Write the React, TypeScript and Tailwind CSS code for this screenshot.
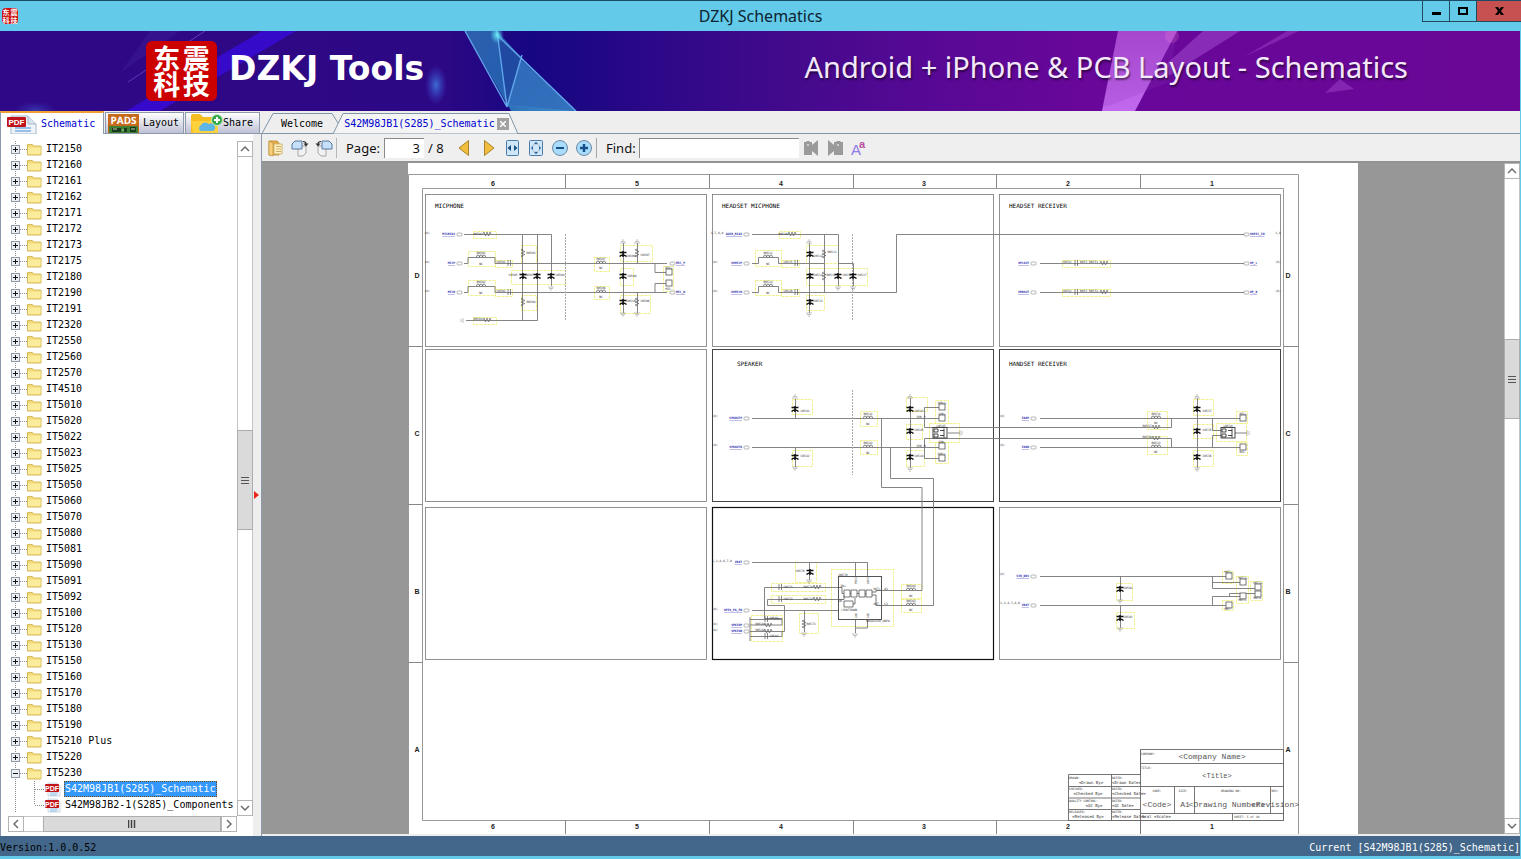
import React from "react";

const models = [
  "IT2150", "IT2160", "IT2161", "IT2162", "IT2171", "IT2172", "IT2173", "IT2175", "IT2180", "IT2190",
  "IT2191", "IT2320", "IT2550", "IT2560", "IT2570", "IT4510", "IT5010", "IT5020", "IT5022", "IT5023",
  "IT5025", "IT5050", "IT5060", "IT5070", "IT5080", "IT5081", "IT5090", "IT5091", "IT5092", "IT5100",
  "IT5120", "IT5130", "IT5150", "IT5160", "IT5170", "IT5180", "IT5190", "IT5210 Plus", "IT5220", "IT5230",
];

const mono = "font-['DejaVu_Sans_Mono','Liberation_Mono',monospace] text-[10px] leading-4";
const ui = "font-['Noto_Sans','Open_Sans',sans-serif]";

/* ---------- title bar and banner ---------- */

function TitleBar() {
  return (
    <header className="grid h-[31px] shrink-0 grid-cols-[1fr_auto_1fr] items-center border-t border-[#1d4a66] bg-[#64caea]">
      <span className="ml-0.5 grid size-4 grid-cols-2 place-items-center rounded-sm bg-[#cc1111] font-['Noto_Sans_CJK_SC',sans-serif] text-[7px] font-bold leading-[7px] text-white">
        <span>东</span><span>震</span><span>科</span><span>技</span>
      </span>
      <h1 className={`text-[16px] leading-6 text-[#0c2330] ${ui}`}>DZKJ Schematics</h1>
      <div className="flex h-[21px] self-start justify-self-end border-b border-l border-[#234a5c]">
        <button aria-label="Minimize" className="flex w-[27px] items-center justify-center border-r border-[#234a5c]">
          <svg width="11" height="11"><path d="M1 6h9v3H1z" fill="#000" /></svg>
        </button>
        <button aria-label="Maximize" className="flex w-[27px] items-center justify-center border-r border-[#234a5c]">
          <svg width="10" height="8"><path d="M1 1h8v6H1z" fill="none" stroke="#000" strokeWidth="2" /></svg>
        </button>
        <button aria-label="Close" className="flex w-[44px] items-center justify-center bg-[#c75050]">
          <svg width="9" height="8"><path d="M0 0h3l1.500 2L6 0h3L6 4l3 4H6L4.500 6 3 8H0l3-4z" fill="#000" /></svg>
        </button>
      </div>
    </header>
  );
}

function BannerArt() {
  return (
    <svg className="absolute inset-0 size-full" viewBox="0 0 1520 80" preserveAspectRatio="none" aria-hidden="true">
      <defs>
        <linearGradient id="bg" x1="0" x2="1" y1="0" y2="0">
          <stop offset="0" stopColor="#2f0887" />
          <stop offset=".29" stopColor="#2d0884" />
          <stop offset=".35" stopColor="#170682" />
          <stop offset=".38" stopColor="#1d0783" />
          <stop offset=".43" stopColor="#2c0888" />
          <stop offset=".52" stopColor="#430a8c" />
          <stop offset=".62" stopColor="#590896" />
          <stop offset=".71" stopColor="#68079a" />
          <stop offset="1" stopColor="#6a0797" />
        </linearGradient>
        <linearGradient id="shard" x1="0" x2="1" y1="0" y2="1">
          <stop offset="0" stopColor="#2d5fae" />
          <stop offset=".5" stopColor="#245fae" />
          <stop offset="1" stopColor="#3f8fd0" />
        </linearGradient>
        <linearGradient id="pink" x1="0" x2="0" y1="0" y2="1">
          <stop offset="0" stopColor="#ad4bd2" />
          <stop offset="1" stopColor="#c169ee" />
        </linearGradient>
        <radialGradient id="glow">
          <stop offset="0" stopColor="#3c78d8" stopOpacity=".9" />
          <stop offset="1" stopColor="#3c48d8" stopOpacity="0" />
        </radialGradient>
        <radialGradient id="cyan">
          <stop offset="0" stopColor="#6ff0f5" />
          <stop offset="1" stopColor="#49c0e8" stopOpacity="0" />
        </radialGradient>
      </defs>
      <rect width="1520" height="80" fill="url(#bg)" />
      <path d="M262 0h34L160 80h-34z" fill="#3a0be0" opacity=".75" />
      <path d="M205 0L128 51" stroke="#7443c8" strokeWidth="1" opacity=".8" />
      <path d="M150 0h30L120 42z" fill="#40209c" opacity=".4" />
      <ellipse cx="436" cy="54" rx="11" ry="20" fill="url(#glow)" />
      <ellipse cx="35" cy="80" rx="22" ry="10" fill="url(#glow)" opacity=".5" />
      <path d="M465 0h32l23 25 56 55h-65z" fill="url(#shard)" />
      <path d="M497 4l10 70 69 6-56-54z" fill="#1d3e9b" opacity=".65" />
      <path d="M520 28l-13 47 69 5z" fill="#3b82c8" opacity=".6" />
      <path d="M465 0l42 76M497 0l10 76M497 4l79 76M507 76l15-52" fill="none" stroke="#61a5ea" strokeWidth="1.400" />
      <ellipse cx="497" cy="4" rx="7" ry="9" fill="url(#cyan)" />
      <path d="M1118 0h59l-42 80h-33z" fill="url(#pink)" />
      <path d="M1118 0l-16 75h7l60-24 8-51z" fill="#8c35bd" opacity=".2" />
      <path d="M1203 0h37l-70 44-18 2z" fill="#9a3fc6" opacity=".65" />
      <path d="M1287 0h12l-55 26z" fill="#9a3fc6" opacity=".5" />
      <path d="M1340 48l14 10-29 4z" fill="#953bc2" opacity=".6" />
      <circle cx="1172" cy="5" r="7" fill="#ff91dc" opacity=".2" />
    </svg>
  );
}

function Banner() {
  return (
    <div className="relative mr-px h-20 shrink-0 overflow-hidden">
      <BannerArt />
      <div className="relative flex h-full items-center">
        <div className="ml-[146px] grid h-[60px] w-[71px] grid-cols-2 place-items-center rounded-md bg-[#cd0000] px-1.5 py-1 font-['Noto_Sans_CJK_SC',sans-serif] text-[27px] font-bold leading-[26px] text-white">
          <span>东</span><span>震</span><span>科</span><span>技</span>
        </div>
        <p className="ml-3 whitespace-nowrap pb-1 font-['DejaVu_Sans',sans-serif] text-[33px] font-bold leading-10 text-white">DZKJ Tools</p>
        <p className="ml-auto mr-28 whitespace-nowrap pb-2 font-['Noto_Sans',sans-serif] text-[29px] leading-10 text-[#f4e9fb] [text-shadow:1px_2px_2px_#0008]">
          Android + iPhone &amp; PCB Layout - Schematics
        </p>
      </div>
    </div>
  );
}

/* ---------- scroll bars ---------- */

function Chevron({ dir }: { dir: "up" | "down" | "left" | "right" }) {
  const d = { up: "M1 7l4-4 4 4", down: "M1 3l4 4 4-4", left: "M7 1L3 5l4 4", right: "M3 1l4 4-4 4" }[dir];
  return <svg width="10" height="10"><path d={d} fill="none" stroke="#666" strokeWidth="1.400" /></svg>;
}

function ScrollButton({ dir }: { dir: "up" | "down" | "left" | "right" }) {
  return (
    <button aria-label={`Scroll ${dir}`} className="flex size-4 shrink-0 items-center justify-center border border-[#b4b4b4] bg-white">
      <Chevron dir={dir} />
    </button>
  );
}

function VerticalScroll({ before, after, thumb }: { before: number; after: number; thumb: string }) {
  return (
    <div className="flex w-4 shrink-0 flex-col items-center border-x border-[#c4c4c4] bg-white">
      <ScrollButton dir="up" />
      <div style={{ flexGrow: before }} />
      <div className={`flex w-4 shrink-0 flex-col items-center justify-center border border-[#adadad] bg-[#dadada] ${thumb}`}>
        <svg width="8" height="8"><path d="M0 1.500h8M0 4.500h8M0 7.500h8" stroke="#555" /></svg>
      </div>
      <div style={{ flexGrow: after }} />
      <ScrollButton dir="down" />
    </div>
  );
}

/* ---------- left panel ---------- */

function Folder() {
  return (
    <svg width="15" height="13" viewBox="0 0 15 13" className="shrink-0" aria-hidden="true">
      <path d="M.5 1.500h5l1 1.500h7.500v9H.5z" fill="#f2dc7a" stroke="#d8ba5c" />
      <path d="M1 4.500h12.500V11H1z" fill="#fbec9c" />
    </svg>
  );
}

function PdfFile() {
  return (
    <svg width="17" height="15" viewBox="0 0 17 15" className="shrink-0" aria-hidden="true">
      <path d="M4 1h9l3 3v10H4z" fill="#f2f6fa" stroke="#b8c8d8" strokeWidth=".7" />
      <path d="M6 11h8M6 13h7" stroke="#8ebce4" />
      <rect x="1" y="2" width="14" height="8" rx="1" fill="#c2151b" />
      <text x="8" y="8.500" fontSize="7" fontWeight="bold" textAnchor="middle" fill="#fff" fontFamily="Liberation Sans">PDF</text>
    </svg>
  );
}

function ModelRow({ name }: { name: string }) {
  const open = name === "IT5230";
  return (
    <li className="flex h-4 shrink-0 items-center">
      <button aria-label={`${open ? "Collapse" : "Expand"} ${name}`} className="h-4">
        <svg width="19" height="16" className="block" aria-hidden="true">
          <path d="M7.500 0v16M12 8.500h7" stroke="#8a8a8a" strokeDasharray="1 1" />
          <rect x="3.500" y="4.500" width="8" height="8" fill="#eceff2" stroke="#8f9aa6" />
          <path d={open ? "M5 8.500h5" : "M5 8.500h5M7.500 6v5"} stroke="#111" />
        </svg>
      </button>
      <Folder />
      <span className="whitespace-pre pl-1">{name}</span>
    </li>
  );
}

function FileRow({ name, selected }: { name: string; selected?: boolean }) {
  return (
    <li className="flex h-4 shrink-0 items-center">
      <svg width="36" height="16" className="block shrink-0" aria-hidden="true">
        <path d={selected ? "M7.500 0v16M26.500 0v16M27 8.500h9" : "M7.500 0v16M26.500 0v8M27 8.500h9"} fill="none" stroke="#8a8a8a" strokeDasharray="1 1" />
      </svg>
      <PdfFile />
      <a href="#" className={`ml-[3px] border border-dotted leading-[14px] ${selected ? "border-[#7a4a1a] bg-[#3399ff] text-white" : "border-transparent"}`}>{name}</a>
    </li>
  );
}

function LeftTabs() {
  return (
    <div className={`flex h-[23px] shrink-0 items-end gap-px border-b border-[#8d99ad] bg-[#eee] ${mono}`}>
      <button className="-mb-px flex h-[23px] w-[104px] items-center gap-1 border-x border-t-2 border-x-[#8d99ad] border-t-[#f0a030] bg-white pl-1 text-[#0000d0]">
        <svg width="32" height="20" aria-hidden="true">
          <path d="M6 2h17l8 8v10H6z" fill="#f0f4f8" stroke="#a8b8c8" />
          <path d="M23 2v8h8" fill="#d8e4ee" stroke="#a8b8c8" />
          <path d="M10 14h16M10 17h16" stroke="#78aee0" strokeWidth="1.500" />
          <rect x="2" y="3" width="19" height="10" rx="1" fill="#c01218" />
          <text x="11.500" y="11" fontSize="8" fontWeight="bold" fill="#fff" textAnchor="middle" fontFamily="Liberation Sans">PDF</text>
        </svg>
        Schematic
      </button>
      <button className="flex h-[21px] w-[79px] items-center gap-1 border border-b-0 border-[#8d99ad] bg-gradient-to-b from-white to-[#bfc1d6] pl-0.5">
        <svg width="31" height="19" aria-hidden="true">
          <rect width="31" height="19" fill="#c76a1c" />
          <rect x="1" y="12" width="29" height="7" fill="#3f7f35" />
          <path d="M4 14h9v4H4zM16 14h3v4h-3zM22 13h6v5h-6z" fill="#183a1a" />
          <path d="M5 15h4M23 15h4M14 16h2" stroke="#c7cfb2" />
          <text x="15.500" y="10" fontSize="10" fontWeight="bold" fill="#fff" textAnchor="middle" textRendering="geometricPrecision" fontFamily="Open Sans">PADS</text>
        </svg>
        Layout
      </button>
      <button className="flex h-[21px] w-[75px] items-center border border-b-0 border-[#8d99ad] bg-gradient-to-b from-white to-[#bfc1d6] pl-1">
        <svg width="33" height="20" aria-hidden="true">
          <path d="M1 3q0-2 2-2h7l3 3h13q2 0 2 2v14H1z" fill="#f5bd20" />
          <path d="M1 8h27v12H3z" fill="#ffd13b" />
          <path d="M10 18a4 4 0 0 1 1-6 5 5 0 0 1 8-1 4 4 0 0 1 4 7z" fill="#5fb5e6" />
          <circle cx="27" cy="7" r="5.500" fill="#35a84c" stroke="#c8ecc8" />
          <path d="M24 7h6M27 4v6" stroke="#fff" strokeWidth="2" />
        </svg>
        Share
      </button>
    </div>
  );
}

function Sidebar() {
  return (
    <aside className="flex w-[262px] shrink-0 flex-col">
      <LeftTabs />
      <div className="flex min-h-0 grow border-l border-[#8d99ad] bg-white">
        <div className="flex min-h-0 min-w-0 grow flex-col pb-1 pl-[7px] pt-[7px]">
          <div className="flex min-h-0 grow">
            <ul className={`flex min-w-0 grow flex-col overflow-hidden whitespace-nowrap text-black ${mono}`}>
              {models.map((m) => <ModelRow key={m} name={m} />)}
              <FileRow name="S42M98JB1(S285)_Schematic" selected />
              <FileRow name="S42M98JB2-1(S285)_Components" />
            </ul>
            <VerticalScroll before={272} after={270} thumb="h-[100px]" />
          </div>
          <div className="mr-4 flex h-4 shrink-0 items-center border-y border-[#c4c4c4]">
            <ScrollButton dir="left" />
            <div className="w-[19px]" />
            <div className="flex h-4 grow items-center justify-center border border-[#adadad] bg-[#dadada]">
              <svg width="8" height="8"><path d="M.5 0v8M3.500 0v8M6.500 0v8" stroke="#444" strokeWidth="1.500" /></svg>
            </div>
            <ScrollButton dir="right" />
          </div>
        </div>
        <div className="flex w-[9px] shrink-0 items-center border-r border-[#8d99ad] bg-[#eee] pl-px pt-5">
          <svg width="6" height="8"><path d="M0 0l5 4-5 4z" fill="#e8261c" /></svg>
        </div>
      </div>
    </aside>
  );
}

/* ---------- document tabs and toolbar ---------- */

function DocTabs() {
  return (
    <div className={`relative flex h-[23px] shrink-0 items-end bg-[#eee] ${mono}`}>
      <svg className="absolute inset-0 h-full w-full" aria-hidden="true">
        <path d="M0 22.500L11 2.500H70L76 12" fill="none" stroke="#7f96a8" />
        <path d="M71 23L81 2.500H247L256 23z" fill="#f4f4f4" stroke="#7f96a8" />
        <path d="M0 22.500H71M256 22.500H4000" stroke="#7f96a8" />
      </svg>
      <button className="relative ml-[19px] h-5 text-black">Welcome</button>
      <div className="relative ml-[21px] flex h-5 items-center gap-0.5">
        <button className="text-[#0000d0]">S42M98JB1(S285)_Schematic</button>
        <button aria-label="Close tab" className="flex size-3 items-center justify-center bg-[#a2a2a2]">
          <svg width="6" height="6"><path d="M0 0l6 6M6 0L0 6" stroke="#fff" strokeWidth="1.500" /></svg>
        </button>
      </div>
    </div>
  );
}

function Tool({ label, children }: { label: string; children: React.ReactNode }) {
  return (
    <button aria-label={label} className="flex size-6 shrink-0 items-center justify-center">
      <svg width="18" height="18" viewBox="0 0 18 18" className="overflow-visible" aria-hidden="true">{children}</svg>
    </button>
  );
}

function Toolbar() {
  return (
    <div className={`flex h-[27px] shrink-0 items-center bg-[#efefef] pl-0.5 text-[13px] leading-5 text-[#111] ${ui}`}>
      <Tool label="Contents">
        <path d="M2 2h8l2 2v12H2z" fill="#e4ae4c" stroke="#b98731" strokeWidth=".8" />
        <path d="M2 2l4 2v13l-4-1z" fill="#f7cf7b" stroke="#b98731" strokeWidth=".6" />
        <path d="M7 5h8v10H7z" fill="#fff0c0" stroke="#c9a964" strokeWidth=".8" />
        <path d="M9 7.500h5M9 10h5M9 12.500h5" stroke="#c09a52" strokeWidth=".8" />
      </Tool>
      <Tool label="Rotate right">
        <path d="M7 7h8v7l-3 3H7z" fill="#f2f2f2" stroke="#a6a6a6" />
        <path d="M4 2h7v8H1V5z" fill="#c5e0f8" stroke="#56789f" />
        <path d="M12 2.500q3 0 3 2.500" fill="none" stroke="#333" strokeWidth="1.200" />
        <path d="M12.500 4.500h5L15 7.500z" fill="#333" />
      </Tool>
      <Tool label="Rotate left">
        <path d="M3 7h8v10H6l-3-3z" fill="#f2f2f2" stroke="#a6a6a6" />
        <path d="M7 2h7l3 3v5H7z" fill="#c5e0f8" stroke="#56789f" />
        <path d="M6 2.500q-3 0-3 2.500" fill="none" stroke="#333" strokeWidth="1.200" />
        <path d="M.5 4.500h5L3 7.500z" fill="#333" />
      </Tool>
      <span className="mr-[9px] h-5 w-px bg-[#b5b5b5]" />
      <label htmlFor="page" className="w-[38px]">Page:</label>
      <input id="page" defaultValue="3" className="h-5 w-10 border-l border-t border-[#8a8a8a] bg-white pr-1 text-right outline-none" />
      <span className="ml-1 mr-1.5 w-[18px] whitespace-nowrap">/ 8</span>
      <Tool label="Previous page"><path d="M13.500 1.500v15L4 9z" fill="#f0bd3c" stroke="#a9842f" /></Tool>
      <Tool label="Next page"><path d="M5.500 1.500v15L15 9z" fill="#f0bd3c" stroke="#a9842f" /></Tool>
      <Tool label="Fit width">
        <rect x="3.500" y="1.500" width="12" height="15" rx="1" fill="#cde6f8" stroke="#4a7ba8" />
        <path d="M4.500 9L8 6v6zM14.500 9L11 6v6z" fill="#1b4f82" />
      </Tool>
      <Tool label="Fit page">
        <rect x="2.500" y="1.500" width="13" height="15" rx="1" fill="#cde6f8" stroke="#4a7ba8" />
        <path d="M9 3l2 2H7zM9 15l2-2H7zM4 9l2-2v4zM14 9l-2-2v4z" fill="#1b4f82" />
        <circle cx="9" cy="9" r="4" fill="none" stroke="#8196b8" strokeDasharray="1 1" />
      </Tool>
      <Tool label="Zoom out">
        <circle cx="9" cy="9" r="7.500" fill="#a9dcfb" stroke="#6c8ca6" />
        <path d="M5 9h8" stroke="#15508a" strokeWidth="2" />
      </Tool>
      <Tool label="Zoom in">
        <circle cx="9" cy="9" r="7.500" fill="#a9dcfb" stroke="#6c8ca6" />
        <path d="M5 9h8M9 5v8" stroke="#15508a" strokeWidth="2.400" />
      </Tool>
      <span className="mr-[9px] h-5 w-px bg-[#a5a5a5]" />
      <label htmlFor="find" className="w-[33px]">Find:</label>
      <input id="find" className="h-5 w-40 border-l border-t border-[#8a8a8a] bg-white px-1 outline-none" />
      <Tool label="Find previous">
        <path d="M2 3h2l1-1h2l1 1h2v3l6-5v16l-6-5v4H2z" fill="#9a9a9a" />
        <circle cx="6" cy="6" r="1" fill="#ddd" />
      </Tool>
      <Tool label="Find next">
        <path d="M2 1l6 5V3h2l1-1h3l1 1h2v13H8v-4l-6 5z" fill="#9a9a9a" />
        <circle cx="12" cy="6" r="1" fill="#ddd" />
      </Tool>
      <Tool label="Match case">
        <text x="1" y="16" fontSize="15" fill="#8c7be8" fontFamily="Liberation Sans">A</text>
        <text x="9" y="9" fontSize="11" fontWeight="bold" fill="#b84ea0" fontFamily="Liberation Sans">a</text>
      </Tool>
    </div>
  );
}

/* ---------- schematic sheet ---------- */

type P = { x: number; y: number };

const Cap = ({ x, y }: P) => (
  <path d={`M${x - 3.5} ${y - 1.5}h7M${x - 3.5} ${y + 2.5}q3.500 -3 7 0M${x} ${y - 3}v6`} fill="none" stroke="#111" strokeWidth="1.500" />
);
const HCap = ({ x, y }: P) => <path d={`M${x - 1} ${y - 3}v6M${x + 1.5} ${y - 3}v6`} stroke="#555" strokeWidth=".7" />;
const Res = ({ x, y }: P) => (
  <path d={`M${x - 4} ${y}l1-2 1.500 4 1.500-4 1.500 4 1.500-4 1 2`} fill="none" stroke="#666" strokeWidth=".7" />
);
const VRes = ({ x, y }: P) => (
  <path d={`M${x} ${y - 4}l-2 1 4 1.500-4 1.500 4 1.500-4 1.500 2 1`} fill="none" stroke="#666" strokeWidth=".7" />
);
const Coil = ({ x, y }: P) => (
  <path d={`M${x - 4.5} ${y}a1.500 2 0 0 1 3 0a1.500 2 0 0 1 3 0a1.500 2 0 0 1 3 0`} fill="#fff" stroke="#555" strokeWidth=".7" />
);
const Ground = ({ x, y, up }: P & { up?: boolean }) => {
  const s = up ? -1 : 1;
  return <path d={`M${x - 3} ${y}h6M${x - 2} ${y + 1.5 * s}h4M${x - 1} ${y + 3 * s}h2`} stroke="#999" strokeWidth=".6" />;
};
const Pad = ({ x, y }: P) => <rect x={x} y={y} width="6" height="6" fill="#fff" stroke="#555" strokeWidth=".8" />;
const Tag = ({ x, y, t, s = 3, c = "#333", a = "middle" }: P & { t: string; s?: number; c?: string; a?: "start" | "middle" | "end" }) => (
  <text x={x} y={y} fontSize={s} fill={c} textAnchor={a}>{t}</text>
);
const Port = ({ x, y, t, left }: P & { t: string; left?: boolean }) => (
  <g>
    <rect x={left ? x + 1 : x - 6} y={y - 1.5} width="5" height="3" rx="1" fill="#fff" stroke="#888" strokeWidth=".6" />
    <text x={left ? x + 7 : x - 8} y={y + 0.5} fontSize="3" fontWeight="bold" fill="#2a2ab0" textAnchor={left ? "start" : "end"} textDecoration="underline">{t}</text>
  </g>
);

const yellowBoxes = [
  [473, 231, 23, 7], [468, 251, 27, 15], [468, 280, 27, 15], [495, 260, 17, 7], [495, 289, 17, 7], [521, 245, 15, 18],
  [511, 270, 54, 14], [521, 295, 15, 15], [473, 317, 23, 7], [594, 257, 15, 14], [594, 286, 15, 13], [620, 245, 32, 16],
  [620, 268, 13, 17], [620, 295, 30, 18], [663, 266, 10, 25],
  [779, 231, 21, 7], [755, 250, 26, 16], [755, 280, 26, 15], [781, 260, 18, 7], [781, 289, 18, 7], [806, 245, 32, 18],
  [806, 268, 61, 17], [806, 295, 18, 15],
  [1062, 260, 48, 7], [1062, 289, 48, 7],
  [792, 399, 20, 15], [792, 450, 20, 16], [860, 411, 17, 15], [860, 440, 17, 14], [906, 397, 21, 14], [906, 424, 16, 15],
  [906, 450, 18, 16], [935, 400, 13, 23], [929, 423, 30, 19], [935, 442, 13, 21],
  [1147, 411, 20, 18], [1147, 436, 20, 18], [1193, 399, 20, 16], [1193, 424, 20, 14], [1193, 450, 20, 16], [1216, 423, 30, 18],
  [1236, 411, 11, 12], [1236, 442, 11, 13],
  [795, 562, 21, 20], [771, 583, 54, 8], [771, 595, 54, 8], [831, 569, 62, 57], [901, 584, 20, 14], [901, 599, 20, 13],
  [799, 613, 19, 20], [751, 615, 31, 26], [1116, 583, 16, 17], [1116, 612, 18, 16], [1222, 571, 11, 12], [1236, 576, 12, 27],
  [1250, 581, 12, 19], [1222, 600, 11, 10],
];

const wires = [
  "M464 234.500H551.500V286M464 263.500H468V257.500H495V263.500H667M464 292.500H468V286.500H495V292.500H667",
  "M466 320.500H537.500V234.500M522.500 234.500V320.500M623.500 243V313M637.500 243V263.500M637.500 292.500V313",
  "M655 263.500V272.500H666M655 292.500V283.500H666",
  "M752 234.500H838.500V286M752 263.500H758.500V257.500H778.500V263.500H824.500M752 292.500H758.500V286.500H778.500V292.500H896.500V234.500H1244",
  "M809.500 243V313M824.500 234.500V292.500M838.500 263.500H853.500V286",
  "M1040 263.500H1244M1040 292.500H1244",
  "M752 418.500H939M752 447.500H939M795.500 399V418.500M795.500 447.500V467M910.500 398V468",
  "M881.500 418.500V487.500H922V590.500H881M890.500 447.500V478.500H933.500V605.500H881",
  "M939 407.500H924.500V427.500H1171.500V418.500M939 458.500H924.500V438.500H1171.500V447.500M948 433H960",
  "M1040 418.500H1241M1040 447.500H1241M1197.500 398V468M1212.500 418.500V430.500H1221M1212.500 447.500V435.500H1221M1235 433H1247",
  "M1040 576.500H1226M1040 605.500H1226M1120.500 576.500V600M1120.500 605.500V628",
  "M1212.500 576.500V588.500H1256M1212.500 582.500H1241M1212.500 605.500V596.500H1241M1229.500 596.500V593.500H1256",
  "M752 562.500H867.500V576M855.500 562.500V576M809.500 562.500V580M838 587.500H764.500V618.500H782V625H750",
  "M838 599.500H767.500V605.500H784.500V631.500H750M752 610.500H838M804.500 610.500V632M855.500 619V633M867.500 619V628H855.500",
  "M750 617V641M750 619.500H782M750 636.500H782V631.500",
];

const caps = [
  [523, 276], [537, 276], [551, 276], [623, 254], [623, 276], [623, 302], [810, 254], [810, 276], [810, 302], [838, 276],
  [853, 276], [795, 409], [795, 457], [910, 409], [910, 431], [910, 457], [1197, 409], [1197, 431], [1197, 457],
  [810, 572], [1120, 589], [1120, 618],
];
const hcaps = [[509, 263], [509, 292], [796, 263], [796, 292], [1076, 263], [1076, 292], [780, 587], [780, 599], [766, 619], [766, 636]];
const resistors = [[487, 234], [487, 320], [792, 234], [1104, 263], [1104, 292], [1156, 427], [1156, 438], [817, 587], [817, 599], [768, 625], [768, 631]];
const vresistors = [[523, 253], [523, 302], [637, 253], [637, 302], [824, 254], [824, 276], [804, 624]];
const coils = [[481, 257], [481, 286], [768, 257], [768, 286], [601, 263], [601, 292], [868, 418], [868, 447], [1156, 418], [1156, 447], [911, 590], [911, 605]];
const pads = [
  [666, 269], [666, 280], [939, 404], [939, 415], [939, 443], [939, 455], [1240, 415], [1240, 444], [1226, 573], [1240, 579],
  [1255, 584], [1255, 591], [1240, 593], [1226, 602],
];
const groundsDown = [[551, 287], [623, 313], [637, 313], [809, 313], [838, 287], [853, 287], [795, 467], [910, 468], [1197, 468], [1120, 600], [1120, 628], [809, 580], [804, 633], [855, 634]];
const groundsUp = [[623, 243], [637, 243], [809, 243], [795, 398], [910, 398], [1197, 398]];

const tags: [number, number, string][] = [
  [478, 234, "R0501"], [481, 253, "B0501"], [481, 264, "NC"], [481, 282, "B0502"], [481, 293, "NC"], [501, 262, "C0501"],
  [501, 291, "C0502"], [531, 253, "R0503"], [513, 275, "C0505"], [529, 275, "C0507"], [560, 275, "C0504"], [531, 302, "R0504"],
  [478, 319, "R0502"], [601, 259, "B0507"], [601, 268, "NC"], [601, 288, "B0508"], [601, 297, "NC"], [631, 256, "C0509"],
  [645, 255, "C0507"], [632, 276, "C0508"], [631, 301, "C0510"], [645, 301, "C0506"], [669, 268, "MIC+"], [669, 289, "MIC-"],
  [783, 234, "R0510"], [768, 253, "B0511"], [768, 264, "NC"], [768, 282, "B0514"], [768, 293, "NC"], [788, 262, "C0515"],
  [788, 291, "C0520"], [818, 256, "C0512"], [832, 252, "R0511"], [818, 275, "C0514"], [831, 275, "R0512"], [847, 275, "C0516"],
  [862, 275, "C0517"], [818, 301, "C0513"],
  [1067, 262, "C0551"], [1089, 262, "B055 R0551"], [1067, 291, "C0552"], [1089, 291, "B055 R0552"],
  [805, 411, "C0541"], [805, 456, "C0542"], [868, 414, "B0541"], [868, 424, "NC"], [868, 443, "B0542"], [868, 453, "NC"],
  [919, 411, "C0543"], [919, 430, "C0545"], [919, 456, "C0544"], [942, 403, "SPK1+"], [942, 414, "SPK+"], [942, 442, "SPK-"],
  [942, 454, "SPK1-"], [941, 426, "L0545"], [921, 417, "SPK_P"], [921, 446, "SPK_N"],
  [1156, 414, "B0531"], [1156, 423, "NC"], [1147, 426, "R0537"], [1147, 437, "R0538"], [1156, 443, "B0532"], [1156, 452, "NC"],
  [1207, 411, "C0537"], [1207, 430, "C0535"], [1207, 456, "C0536"], [1243, 414, "REC+"], [1243, 452, "REC-"], [1228, 426, "L0534"],
  [800, 571, "C0570"], [788, 587, "C0571"], [788, 599, "C0572"], [808, 587, "R0571"], [808, 599, "R0572"], [843, 575, "U0570"],
  [911, 586, "B0584"], [911, 596, "NC"], [911, 601, "B0583"], [911, 610, "NC"], [811, 624, "R0573"], [774, 618, "C0581"],
  [760, 624, "R0541"], [760, 630, "R0542"], [774, 636, "C0582"], [878, 621, "NAU8325B_U0PA"], [886, 589, "A3"], [886, 604, "C3"],
  [1128, 588, "C0591"], [1128, 617, "C0592"], [1228, 572, "MOT+"], [1243, 578, "MOT1+"], [1258, 583, "MOT2+"], [1243, 600, "MOT1-"],
  [1258, 598, "MOT2-"], [1228, 609, "MOT-"],
  [427, 233, "(8)"], [427, 262, "(8)"], [427, 291, "(8)"], [717, 233, "1,7,8,9"], [715, 262, "(8)"], [715, 291, "(8)"],
  [1278, 233, "1,8"], [1278, 262, "(8)"], [1278, 291, "(8)"], [715, 416, "(8)"], [715, 445, "(8)"], [1002, 416, "(8)"],
  [1002, 445, "(8)"], [722, 561, "1,2,4,6,7,9"], [715, 609, "(8)"], [715, 624, "(8)"], [715, 630, "(8)"], [1002, 574, "(8)"], [1010, 603, "1,2,4,7,8,9"],
];

const panels: [number, number, string, number][] = [
  [425, 194, "#777", 0.8], [712, 194, "#777", 0.8], [999, 194, "#777", 0.8],
  [425, 349, "#777", 0.8], [712, 349, "#444", 1], [999, 349, "#444", 1],
  [425, 507, "#777", 0.8], [712, 507, "#111", 1.2], [999, 507, "#777", 0.8],
];

function TitleBlock() {
  return (
    <g>
      <path
        d="M1140.500 749.500H1283.500V820.500H1068.500V774.500H1140.500zM1140.500 749.500V834M1140.500 763.500H1283.500M1068.500 786.500H1283.500M1068.500 798H1140.500M1068.500 809.500H1140.500M1140.500 813.500H1283.500M1111.500 774.500V820.500M1174.500 786.500V813.500M1194.500 786.500V813.500M1270.500 786.500V813.500M1232.500 813.500V820.500"
        fill="none" stroke="#666" strokeWidth=".9"
      />
      <g fontFamily="Liberation Mono">
        <Tag x={1212} y={759} t="<Company Name>" s={8} c="#555" />
        <Tag x={1217} y={778} t="<Title>" s={7} c="#555" />
        <Tag x={1157} y={807} t="<Code>" s={8} c="#555" />
        <Tag x={1185} y={807} t="A1" s={8} c="#555" />
        <Tag x={1227} y={807} t="<Drawing Number>" s={8} c="#555" />
        <Tag x={1275} y={807} t="<Revision>" s={8} c="#555" />
      </g>
      <Tag x={1091} y={784} t="<Drawn By>" s={4} />
      <Tag x={1088} y={795} t="<Checked By>" s={4} />
      <Tag x={1094} y={807} t="<QC By>" s={4} />
      <Tag x={1088} y={818} t="<Released By>" s={4} />
      <Tag x={1112} y={784} t="<Drawn Date>" s={4} a="start" />
      <Tag x={1112} y={795} t="<Checked Date>" s={4} a="start" />
      <Tag x={1112} y={807} t="<QC Date>" s={4} a="start" />
      <Tag x={1112} y={818} t="<Release Date>" s={4} a="start" />
      <Tag x={1142} y={818} t="Scal <Scale>" s={4} a="start" />
      <Tag x={1234} y={818} t="SHEET: 5  of  10" s={3} a="start" />
      {[["DRAWN:", 779], ["CHECKED:", 790], ["QUALITY CONTROL:", 802], ["RELEASED:", 813]].map(([t, y]) => (
        <Tag key={t} x={1069} y={Number(y)} t={String(t)} a="start" />
      ))}
      {[779, 790, 802, 813].map((y) => <Tag key={y} x={1112} y={y} t="DATED:" a="start" />)}
      <Tag x={1141} y={755} t="COMPANY:" a="start" />
      <Tag x={1141} y={769} t="TITLE:" a="start" />
      <Tag x={1157} y={792} t="CODE:" />
      <Tag x={1183} y={792} t="SIZE:" />
      <Tag x={1231} y={792} t="DRAWING NO:" />
      <Tag x={1275} y={792} t="REV:" />
    </g>
  );
}

function Schematic() {
  const columns: [string, number][] = [["6", 493], ["5", 637], ["4", 781], ["3", 924], ["2", 1068], ["1", 1212]];
  const rows: [string, number][] = [["D", 275], ["C", 433], ["B", 591], ["A", 749]];
  return (
    <svg className="block h-full w-[950px] shrink-0 bg-white font-['DejaVu_Sans_Mono','Liberation_Mono',monospace]" viewBox="408 163 950 671" preserveAspectRatio="xMidYMin slice" role="img" aria-label="Audio schematic sheet">
      <path d="M408.500 840V174.500H1298.500V840M422.500 188.500H1283.500V820.500H422.500z" fill="none" stroke="#999" />
      <path
        d="M565.500 174V188M709.500 174V188M853.500 174V188M996.500 174V188M1140.500 174V188M565.500 820V834M709.500 820V834M853.500 820V834M996.500 820V834M408 346.500H422M408 504.500H422M408 662.500H422M1284 346.500H1298M1284 504.500H1298M1284 662.500H1298"
        stroke="#888"
      />
      <g fontSize="7" fontWeight="bold" fill="#222" textAnchor="middle" fontFamily="Liberation Sans">
        {columns.map(([t, x]) => <React.Fragment key={t}><text x={x} y="186">{t}</text><text x={x} y="829">{t}</text></React.Fragment>)}
        {rows.map(([t, y]) => <React.Fragment key={t}><text x="417" y={y + 3}>{t}</text><text x="1288" y={y + 3}>{t}</text></React.Fragment>)}
      </g>
      {panels.map(([x, y, c, w]) => <rect key={`${x}-${y}`} x={x + 0.5} y={y + 0.5} width="281" height="152" fill="none" stroke={c} strokeWidth={w} />)}
      {yellowBoxes.map(([x, y, w, h]) => <rect key={`${x}-${y}`} x={x + 0.5} y={y + 0.5} width={w} height={h} fill="none" stroke="#f0f08c" strokeDasharray="3 1" />)}
      <path d={wires.join("")} fill="none" stroke="#777" strokeWidth=".9" />
      <path d="M565.500 234V320M852.500 234V320M852.500 390V475" stroke="#aaa" strokeDasharray="2 1" />
      {coils.map(([x, y]) => <Coil key={`${x}-${y}`} x={x} y={y} />)}
      {caps.map(([x, y]) => <Cap key={`${x}-${y}`} x={x} y={y} />)}
      {hcaps.map(([x, y]) => <HCap key={`${x}-${y}`} x={x} y={y} />)}
      {resistors.map(([x, y]) => <Res key={`${x}-${y}`} x={x} y={y} />)}
      {vresistors.map(([x, y]) => <VRes key={`${x}-${y}`} x={x} y={y} />)}
      {pads.map(([x, y]) => <Pad key={`${x}-${y}`} x={x} y={y} />)}
      {groundsDown.map(([x, y]) => <Ground key={`${x}-${y}`} x={x} y={y} />)}
      {groundsUp.map(([x, y]) => <Ground key={`${x}-${y}`} x={x} y={y} up />)}

      {[933, 1221].map((x) => (
        <g key={x} fill="#fff" stroke="#333" strokeWidth=".9">
          <rect x={x} y="427.500" width="14" height="10.500" />
          <path d={`M${x + 1} 429h4v3h-4zM${x + 1} 434h4v3h-4zM${x + 7} 430.500h4M${x + 7} 435.500h4M${x + 11} 428.500v9`} />
        </g>
      ))}
      <path d="M960 430v6M962 431v4M1247 430v6M1249 431v4M461 319v3M463 318v5" stroke="#999" strokeWidth=".6" />

      <rect x="838.500" y="576.500" width="43" height="43" fill="#fff" stroke="#555" />
      <path
        d="M844 590h6v7h-6zM851 590h6v7h-6zM859 590h6v7h-6zM866 590h6v7h-6zM844 601h9v6h-9zM838 587.500h4v6h2M838 599.500h6v-4M850 593.500h1M857 593.500h2M865 593.500h1M872 592h4v-1.500h5M872 595h4v10.500h5M853 604h2v-6"
        fill="none" stroke="#555" strokeWidth=".8"
      />
      <Tag x={843} y={587} t="IN+" /><Tag x={841} y={602} t="IN-" /><Tag x={849} y={611} t="/SHUTDOWN" />
      <Tag x={877} y={590} t="OUT+" /><Tag x={877} y={605} t="OUT-" />
      <g fontSize="3" fill="#333">
        <text transform="translate(857 584) rotate(-90)">PVDD</text><text transform="translate(869 584) rotate(-90)">AVDD</text>
        <text transform="translate(857 618) rotate(-90)">GND</text><text transform="translate(869 618) rotate(-90)">GND</text>
      </g>

      <Port x={463} y={234.5} t="MICBIAS" /><Port x={463} y={263.5} t="MICP" /><Port x={463} y={292.5} t="MICN" />
      <Port x={669} y={263.5} t="MIC_P" left /><Port x={669} y={292.5} t="MIC_N" left />
      <Port x={750} y={234.5} t="AUXB_BIAS" /><Port x={750} y={263.5} t="HSMICP" /><Port x={750} y={292.5} t="HSMICN" />
      <Port x={1037} y={263.5} t="HPLOUT" /><Port x={1037} y={292.5} t="HPROUT" />
      <Port x={1243} y={234.5} t="HSMIC_IN" left /><Port x={1243} y={263.5} t="HP_L" left /><Port x={1243} y={292.5} t="HP_R" left />
      <Port x={750} y={418.5} t="SPKOUTP" /><Port x={750} y={447.5} t="SPKOUTN" />
      <Port x={1037} y={418.5} t="EARP" /><Port x={1037} y={447.5} t="EARN" />
      <Port x={750} y={562.5} t="VBAT" /><Port x={750} y={610.5} t="GPIO_PA_EN" />
      <Port x={750} y={625.5} t="SPKINP" /><Port x={750} y={631.5} t="SPKINN" />
      <Port x={1037} y={576.5} t="VIB_DRV" /><Port x={1037} y={605.5} t="VBAT" />
      {tags.map(([x, y, t]) => <Tag key={`${x}-${y}`} x={x} y={y + 1} t={t} />)}

      <g fontSize="6" fill="#000">
        <text x="435" y="208">MICPHONE</text>
        <text x="722" y="208">HEADSET MICPHONE</text>
        <text x="1009" y="208">HEADSET RECEIVER</text>
        <text x="737" y="366">SPEAKER</text>
        <text x="1009" y="366">HANDSET RECEIVER</text>
      </g>
      <TitleBlock />
    </svg>
  );
}

export default function App() {
  return (
    <div className="flex h-screen flex-col overflow-hidden bg-[#64caea]">
      <TitleBar />
      <Banner />
      <div className="mr-px flex min-h-0 grow bg-[#eee]">
        <Sidebar />
        <section className="flex min-w-0 grow flex-col">
          <DocTabs />
          <Toolbar />
          <div className="mb-0.5 flex min-h-0 grow border-t-2 border-[#929292] bg-[#979797]">
            <main className="flex min-w-0 grow justify-center overflow-hidden">
              <Schematic />
            </main>
            <VerticalScroll before={161} after={401} thumb="h-20" />
          </div>
        </section>
      </div>
      <footer className={`mr-px mb-[3px] flex h-5 shrink-0 items-end justify-between bg-[#42678a] ${mono}`}>
        <span className="text-black">Version:1.0.0.52</span>
        <span className="text-white">Current [S42M98JB1(S285)_Schematic]</span>
      </footer>
    </div>
  );
}
